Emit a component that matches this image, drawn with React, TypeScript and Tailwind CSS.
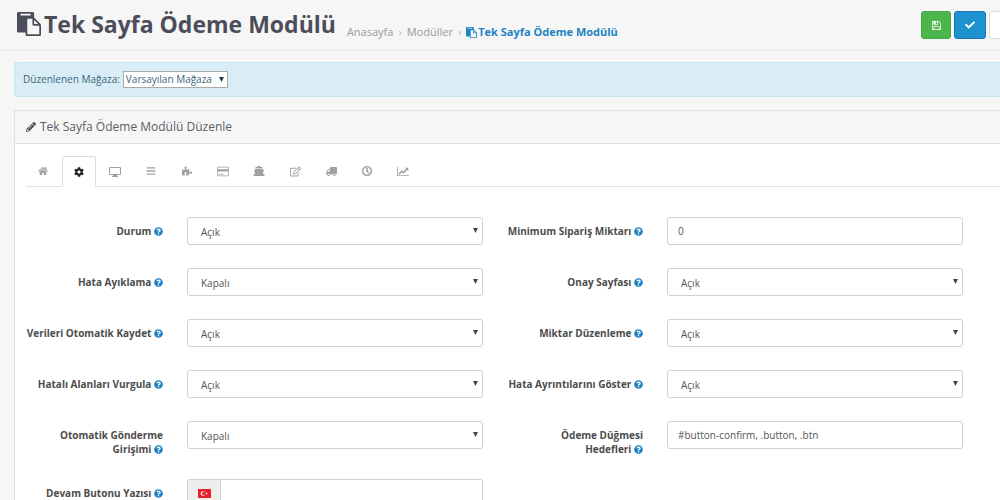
import React from "react";
import {
  FaBars,
  FaCheck,
  FaCog,
  FaHome,
  FaPencilAlt,
  FaPuzzlePiece,
  FaQuestionCircle,
  FaRegClock,
  FaRegEdit,
  FaTruck,
} from "react-icons/fa";

type FieldProps = {
  id: string;
  label: string;
  children: React.ReactNode;
};

function DesktopIcon() {
  return (
    <svg viewBox="0 0 12 11" fill="currentColor" className="h-[11px] w-3" aria-hidden="true">
      <path fillRule="evenodd" d="M1 1h10q1 0 1 1v6q0 1-1 1H8v1H9v1H3v-1h1V9H1Q0 9 0 8V2Q0 1 1 1zM1 2v6h10V2z" />
    </svg>
  );
}

function CardIcon() {
  return (
    <svg viewBox="0 0 1920 1792" fill="currentColor" className="h-[11px] w-3" aria-hidden="true">
      <path d="M1760 128q66 0 113 47t47 113v1216q0 66-47 113t-113 47h-1600q-66 0-113-47t-47-113v-1216q0-66 47-113t113-47h1600zm-1600 128q-13 0-22.500 9.500t-9.500 22.500v224h1664v-224q0-13-9.500-22.500t-22.500-9.500h-1600zm1600 1280q13 0 22.500-9.500t9.500-22.500v-608h-1664v608q0 13 9.500 22.500t22.500 9.500h1600zm-1504-128v-128h256v128h-256zm384 0v-128h384v128h-384z" />
    </svg>
  );
}

function ShipIcon() {
  return (
    <svg viewBox="0 0 12 12" fill="currentColor" className="size-3" aria-hidden="true">
      <path d="M4.500 1H7.500V2H9.500V4.500L11 5.200L9.700 8.500L11.500 9.500V11H.5V9.500L2.300 8.500L1 5.200L2.500 4.500V2H4.500zM3.500 3V4.100L6 3.200L8.500 4.100V3z" />
    </svg>
  );
}

function LineChartIcon() {
  return (
    <svg viewBox="0 0 2048 1792" fill="currentColor" className="h-[11px] w-3" aria-hidden="true">
      <path d="M2048 1536v128h-2048v-1536h128v1408h1920zm-128-1248v435q0 21-19.500 29.500t-35.500-7.500l-121-121-633 633q-10 10-23 10t-23-10l-233-233-416 416-192-192 585-585q10-10 23-10t23 10l233 233 464-464-121-121q-16-16-7.500-35.500t29.500-19.500h435q14 0 23 9t9 23z" />
    </svg>
  );
}

const tabs = [
  { name: "Anasayfa", icon: <FaHome /> },
  { name: "Ayarlar", icon: <FaCog />, active: true },
  { name: "Tasarım", icon: <DesktopIcon /> },
  { name: "Alanlar", icon: <FaBars /> },
  { name: "Modüller", icon: <FaPuzzlePiece /> },
  { name: "Ödeme", icon: <CardIcon /> },
  { name: "Kargo", icon: <ShipIcon /> },
  { name: "Onay", icon: <FaRegEdit className="size-[11px]" /> },
  { name: "Teslimat", icon: <FaTruck className="size-[11px] -scale-x-100" /> },
  { name: "Zaman", icon: <FaRegClock className="stroke-current stroke-[30]" /> },
  { name: "Analiz", icon: <LineChartIcon /> },
];

function PasteIcon({ className }: { className: string }) {
  return (
    <svg viewBox="0 0 1792 1792" fill="currentColor" className={className} aria-hidden="true">
      <path d="M768 1664h896v-640h-416q-40 0-68-28t-28-68v-416h-384v1152zm256-1440v-64q0-13-9.500-22.500t-22.500-9.500h-704q-13 0-22.500 9.500t-9.500 22.500v64q0 13 9.500 22.500t22.500 9.500h704q13 0 22.500-9.500t9.500-22.500zm256 672h299l-299-299v299zm512 128v672q0 40-28 68t-68 28h-960q-40 0-68-28t-28-68v-160h-544q-40 0-68-28t-28-68v-1344q0-40 28-68t68-28h1088q40 0 68 28t28 68v328q21 13 36 28l408 408q28 28 48 76t20 88z" />
    </svg>
  );
}

function SaveIcon() {
  return (
    <svg viewBox="0 0 1536 1536" fill="currentColor" className="size-[9px]" aria-hidden="true">
      <path d="M384 1408h768v-384h-768v384zm896 0h128v-896q0-14-10-38.500t-20-34.500l-281-281q-10-10-34-20t-39-10v416q0 40-28 68t-68 28h-576q-40 0-68-28t-28-68v-416h-128v1280h128v-416q0-40 28-68t68-28h832q40 0 68 28t28 68v416zm-384-928v-320q0-13-9.500-22.500t-22.500-9.500h-192q-13 0-22.500 9.500t-9.500 22.500v320q0 13 9.500 22.500t22.500 9.500h192q13 0 22.500-9.500t9.500-22.500zm640 32v928q0 40-28 68t-68 28h-1344q-40 0-68-28t-28-68v-1344q0-40 28-68t68-28h928q40 0 88 20t76 48l280 280q28 28 48 76t20 88z" />
    </svg>
  );
}

function Arrow({ className }: { className: string }) {
  return (
    <svg
      viewBox="0 0 6 6"
      fill="currentColor"
      className={`pointer-events-none absolute size-[5px] ${className}`}
      aria-hidden="true"
    >
      <path d="M0 0h6L3 6z" />
    </svg>
  );
}

function Field({ id, label, children }: FieldProps) {
  // the help icon stays on the same line as the last word
  const words = label.split(" ");
  const last = words.pop();

  return (
    <div className="grid grid-cols-3">
      <label htmlFor={id} className="pt-[7px] pr-3 pl-2 text-right leading-[14px] font-bold text-[#4c4c4c]">
        {words.join(" ")}{" "}
        <span className="whitespace-nowrap">
          {last} <FaQuestionCircle className="inline size-[9px] align-[-1px] text-[#1e82c4]" />
        </span>
      </label>
      <div className="col-span-2 px-3">{children}</div>
    </div>
  );
}

function SelectField({ id, label, value }: { id: string; label: string; value: string }) {
  return (
    <Field id={id} label={label}>
      <div className="relative">
        <select
          id={id}
          defaultValue={value}
          className="block h-7 w-full appearance-none rounded-[3px] border border-[#d0d0d0] bg-white px-[13px] pt-[2px] text-[#555]"
        >
          <option>Açık</option>
          <option>Kapalı</option>
        </select>
        <Arrow className="top-[11px] right-[5px] text-[#444]" />
      </div>
    </Field>
  );
}

function TextField({ id, label, value }: { id: string; label: string; value: string }) {
  return (
    <Field id={id} label={label}>
      <input
        id={id}
        type="text"
        defaultValue={value}
        className="block h-7 w-full rounded-[3px] border border-[#d0d0d0] bg-white px-[10px] text-[#555]"
      />
    </Field>
  );
}

export default function App() {
  return (
    <div className="h-screen overflow-hidden bg-[#f6f6f6] font-['Open_Sans',sans-serif] text-[10px] text-[#666]">
      <header className="flex h-[51px] items-start justify-between overflow-hidden border-b border-[#e8e8e8] pl-[17px]">
        <div className="flex items-baseline gap-[11px] pt-[8px]">
          <h1 className="flex items-center gap-[3px] text-[23px] leading-8 font-bold text-[#4c4d5a]">
            <PasteIcon className="size-6" />
            Tek Sayfa Ödeme Modülü
          </h1>
          <nav className="flex items-center text-[11px] text-[#999]">
            <a href="#">Anasayfa</a>
            <span className="px-[5px] text-[#bbb]">›</span>
            <a href="#">Modüller</a>
            <span className="px-[5px] text-[#bbb]">›</span>
            <a href="#" className="flex items-center gap-px font-bold text-[#1e82c4]">
              <PasteIcon className="size-[11px]" />
              Tek Sayfa Ödeme Modülü
            </a>
          </nav>
        </div>
        <div className="-mr-5 flex gap-[3px] pt-[11px]">
          <button
            type="button"
            aria-label="Kaydet"
            className="flex h-7 w-[30px] items-center justify-center rounded-[3px] border border-[#44a848] bg-[#4cb64c] text-white"
          >
            <SaveIcon />
          </button>
          <button
            type="button"
            aria-label="Uygula"
            className="flex h-7 w-8 items-center justify-center rounded-[3px] border border-[#1978ab] bg-[#1e91cf] text-white"
          >
            <FaCheck className="size-[10px]" />
          </button>
          <button
            type="button"
            aria-label="İptal"
            className="h-7 w-[31px] rounded-[3px] border border-[#ddd] bg-white"
          />
        </div>
      </header>

      <main className="pt-[11px] pl-[14px]">
        <div className="flex h-[35px] items-center gap-[3px] rounded-l-[3px] border border-r-0 border-[#c5e6ef] bg-[#d9edf7] pl-2 text-[#3c6678]">
          <label htmlFor="store">Düzenlenen Mağaza:</label>
          <div className="relative">
            <select
              id="store"
              className="block h-[17px] appearance-none border border-[#a9a9a9] bg-white pr-[14px] pl-[2px] text-[#3c6678]"
            >
              <option>Varsayılan Mağaza</option>
            </select>
            <Arrow className="top-[6px] right-[4px] text-[#1c3c4c]" />
          </div>
        </div>

        <section className="mt-[13px] border border-r-0 border-[#e0e0e0] bg-white">
          <h2 className="flex h-[33px] items-center gap-1 border-b border-[#e0e0e0] bg-[#f6f6f6] pl-[11px] text-[12px] text-[#5c5d68]">
            <FaPencilAlt className="size-[10px] text-[#4c4d5a]" />
            Tek Sayfa Ödeme Modülü Düzenle
          </h2>

          <div className="ml-[11px] flex gap-[2px] border-b border-[#e2e2e2] pt-3">
            {tabs.map((tab) => (
              <button
                key={tab.name}
                type="button"
                aria-label={tab.name}
                className={
                  tab.active
                    ? "-mb-px flex h-[31px] w-[34px] items-center justify-center rounded-t-[2px] border border-b-0 border-[#ddd] bg-white text-[10px] text-[#222]"
                    : "flex h-[30px] w-[34px] items-center justify-center text-[10px] text-[#a0a0a0]"
                }
              >
                {tab.icon}
              </button>
            ))}
          </div>

          <form className="grid grid-cols-2 pt-[30px] pr-[25px] pb-6">
            <div className="flex flex-col gap-[23px]">
              <SelectField id="status" label="Durum" value="Açık" />
              <SelectField id="debug" label="Hata Ayıklama" value="Kapalı" />
              <SelectField id="autosave" label="Verileri Otomatik Kaydet" value="Açık" />
              <SelectField id="highlight" label="Hatalı Alanları Vurgula" value="Açık" />
              <SelectField id="autosubmit" label="Otomatik Gönderme Girişimi" value="Kapalı" />
              <Field id="continue" label="Devam Butonu Yazısı">
                <div className="flex h-7 overflow-hidden rounded-[3px] border border-[#d0d0d0]">
                  <span className="flex w-[33px] items-center justify-center border-r border-[#d0d0d0] bg-[#eee]">
                    <svg viewBox="0 0 13 9" className="h-[9px] w-[13px]" aria-hidden="true">
                      <path fill="#e8202a" d="M0 0h13v9H0z" />
                      <circle cx="5" cy="4.500" r="2.300" fill="#fff" />
                      <circle cx="5.700" cy="4.500" r="1.700" fill="#e8202a" />
                      <path fill="#fff" d="M7 4.500l.9-.3.100-1 .6.800 1-.3-.6.800.6.800-1-.3-.6.800-.1-1z" />
                    </svg>
                  </span>
                  <input id="continue" type="text" className="min-w-0 flex-1 bg-white px-[10px]" />
                </div>
              </Field>
            </div>
            <div className="flex flex-col gap-[23px]">
              <TextField id="minimum" label="Minimum Sipariş Miktarı" value="0" />
              <SelectField id="confirm" label="Onay Sayfası" value="Açık" />
              <SelectField id="quantity" label="Miktar Düzenleme" value="Açık" />
              <SelectField id="errors" label="Hata Ayrıntılarını Göster" value="Açık" />
              <TextField id="targets" label="Ödeme Düğmesi Hedefleri" value="#button-confirm, .button, .btn" />
            </div>
          </form>
        </section>
      </main>
    </div>
  );
}
